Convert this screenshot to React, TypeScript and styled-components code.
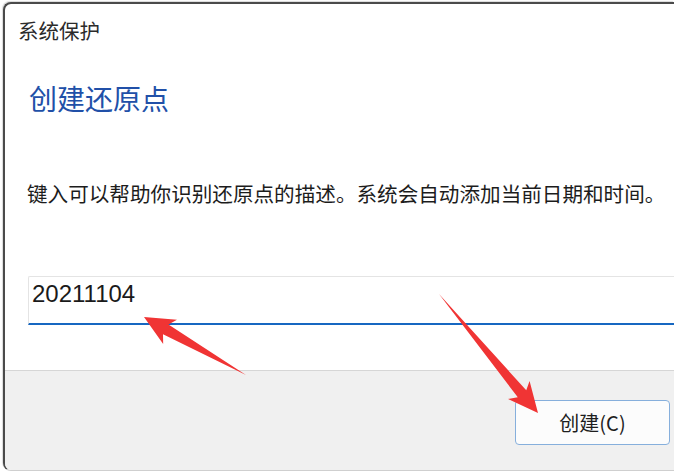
import styled, { createGlobalStyle } from 'styled-components';

// 系统保护 -> 创建还原点 对话框 (截图复刻)
const GlobalStyle = createGlobalStyle`
  html, body {
    margin: 0;
    padding: 0;
    background: #fff;
    overflow: hidden;
  }
  body {
    width: 674px;
    height: 476px;
    font-family: "Noto Sans CJK SC", "Noto Sans", sans-serif;
  }
`;

type Point = { x: number; y: number };

// 标注用的红色箭头, 从 tail 指向 tip
const Arrow = ({ tail, tip }: { tail: Point; tip: Point }) => {
  const dx = tip.x - tail.x;
  const dy = tip.y - tail.y;
  const len = Math.sqrt(dx * dx + dy * dy);
  const angle = (Math.atan2(dy, dx) * 180) / Math.PI;
  const head = 29;
  const pts = [
    [0, 0],
    [len - head + 4, 5.5],
    [len - head - 1, 14],
    [len, 0],
    [len - head - 1, -14],
    [len - head + 4, -5.5],
  ]
    .map((p) => p.join(','))
    .join(' ');
  return (
    <polygon
      points={pts}
      fill="#f03434"
      transform={`translate(${tail.x} ${tail.y}) rotate(${angle})`}
    />
  );
};

const App = () => {
  return (
    <>
      <GlobalStyle />
      <Page>
        <Window>
          <Body>
            <Title>系统保护</Title>
            <Heading>创建还原点</Heading>
            <Description>键入可以帮助你识别还原点的描述。系统会自动添加当前日期和时间。</Description>
            <NameInput readOnly value="20211104" />
          </Body>
          <Footer>
            <CreateButton>创建(C)</CreateButton>
          </Footer>
        </Window>
        <Marks viewBox="0 0 674 476">
          <Arrow tail={{ x: 246, y: 375 }} tip={{ x: 144, y: 317 }} />
          <Arrow tail={{ x: 439, y: 294 }} tip={{ x: 538, y: 413 }} />
        </Marks>
      </Page>
    </>
  );
};

const Page = styled.div`
  position: relative;
  width: 674px;
  height: 476px;
  padding: 2px 0 0 3px;
  box-sizing: border-box;
`;

const Window = styled.div`
  width: 671px;
  height: 469px;
  box-sizing: border-box;
  border: 2px solid #4a4a4a;
  border-right: none;
  border-bottom: 1px solid #cfcfcf;
  border-radius: 8px 0 0 8px;
  box-shadow: -1px -1px 1px rgba(0, 0, 0, 0.15);
  display: flex;
  flex-direction: column;
  overflow: hidden;
  background: #fff;
`;

const Body = styled.div`
  flex: 1;
  display: flex;
  flex-direction: column;
  align-items: flex-start;
  padding: 16px 0 0 13px;
`;

const Title = styled.div`
  font-size: 20.5px;
  line-height: 20px;
  color: #2b2b2b;
`;

const Heading = styled.h1`
  margin: 45px 0 0 11px;
  font-size: 28px;
  line-height: 27px;
  font-weight: 400;
  color: #2150a8;
`;

const Description = styled.p`
  margin: 71px 0 0 9px;
  font-size: 20.6px;
  line-height: 21px;
  color: #1c1c1c;
  white-space: nowrap;
`;

const NameInput = styled.input`
  margin: 72px 0 0 10px;
  width: 660px;
  height: 49px;
  box-sizing: border-box;
  padding: 5px 3px 17px;
  border: 1px solid #e4e4e4;
  border-right: none;
  border-bottom: 2px solid #1667c1;
  border-radius: 2px 0 0 0;
  outline: none;
  background: #fff;
  font-family: "Liberation Sans", Arial, sans-serif;
  font-size: 24px;
  line-height: 24px;
  color: #1a1a1a;
`;

const Footer = styled.div`
  height: 100px;
  box-sizing: border-box;
  display: flex;
  justify-content: flex-end;
  align-items: flex-start;
  padding: 29px 4px 0 0;
  background: #f0f0f0;
  border-top: 1px solid #d6d6d6;
`;

const CreateButton = styled.button`
  width: 155px;
  height: 45px;
  box-sizing: border-box;
  border: 1px solid #86afdc;
  border-radius: 4px;
  background: #fcfcfc;
  font-family: "Noto Sans CJK SC", "Noto Sans", sans-serif;
  font-size: 20px;
  line-height: 20px;
  color: #1e1e1e;
  padding: 0;
`;

const Marks = styled.svg`
  position: absolute;
  left: 0;
  top: 0;
  width: 674px;
  height: 476px;
  pointer-events: none;
`;

export default App;
